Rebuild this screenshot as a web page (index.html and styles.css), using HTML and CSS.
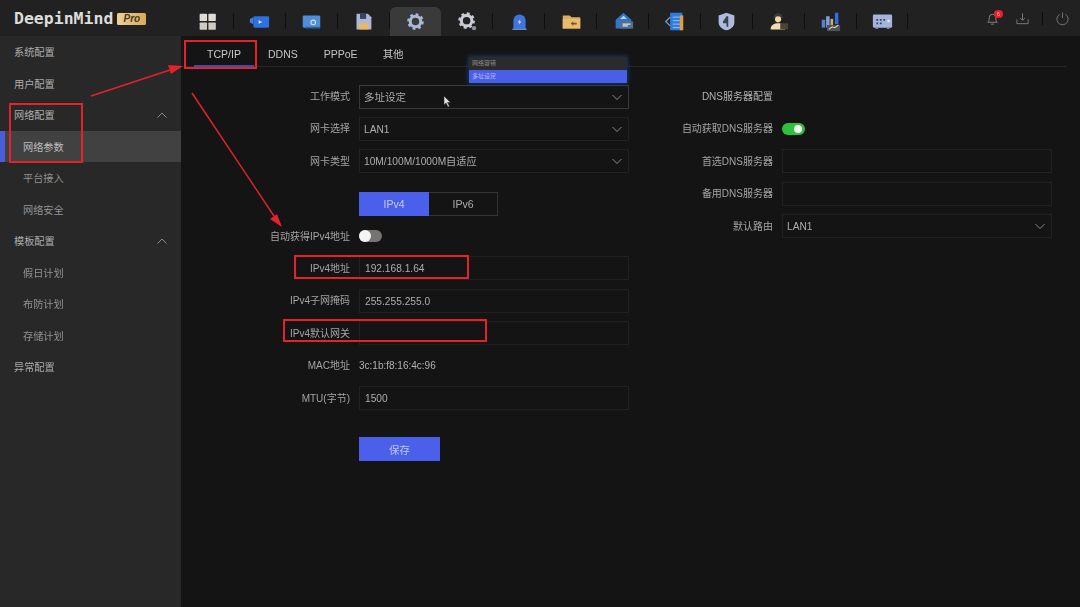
FILE: index.html
```html
<!DOCTYPE html>
<html lang="zh">
<head>
<meta charset="utf-8">
<title>DeepinMind Pro</title>
<link rel="stylesheet" href="styles.css">
</head>
<body>
<div class="page">
  <header class="topbar">
    <div class="brand"><span class="brand-name">DeepinMind</span><span class="brand-pro">Pro</span></div>
    <nav class="nav">
      <div class="nav-item"><svg class="ico" viewBox="0 0 24 24"><rect x="3" y="3" width="8.500" height="8.500" rx="1" fill="#e0dcd4"/><rect x="13" y="3" width="8.500" height="8.500" rx="1" fill="#e0dcd4"/><rect x="3" y="13" width="8.500" height="8.500" rx="1" fill="#cfcbc3"/><rect x="13" y="13" width="8.500" height="8.500" rx="1" fill="#cfcbc3"/></svg></div>
      <div class="nav-item"><svg class="ico" viewBox="0 0 24 24"><path d="M1 9l4-2v8l-4-2z" fill="#3f7fd8"/><rect x="5" y="6" width="18" height="13" rx="1.500" fill="#2f6fe0"/><path d="M11 10.500l4 2-4 2z" fill="#e8eefc"/></svg></div>
      <div class="nav-item"><svg class="ico" viewBox="0 0 24 24"><rect x="2" y="5" width="20" height="14" rx="1.500" fill="#4f8fd8"/><rect x="5" y="18" width="17" height="2" fill="#2c5f9f"/><circle cx="14" cy="13" r="2.600" fill="none" stroke="#cfe0f5" stroke-width="1.200"/></svg></div>
      <div class="nav-item"><svg class="ico" viewBox="0 0 24 24"><path d="M4 3h13l4 4v14H4z" fill="#aab8dc"/><rect x="8" y="3" width="7" height="6" fill="#39425c"/><rect x="7" y="14" width="11" height="7" fill="#eab95c"/></svg></div>
      <div class="nav-item is-active"><svg class="ico" viewBox="0 0 24 24"><circle cx="12" cy="12" r="6" fill="none" stroke="#a8bad8" stroke-width="3.500"/><circle cx="12" cy="12" r="8" fill="none" stroke="#a8bad8" stroke-width="3" stroke-dasharray="3.100 3.180"/></svg></div>
      <div class="nav-item"><svg class="ico" viewBox="0 0 24 24"><circle cx="11" cy="11" r="6" fill="none" stroke="#c9ccd4" stroke-width="3.500"/><circle cx="11" cy="11" r="8" fill="none" stroke="#c9ccd4" stroke-width="3" stroke-dasharray="3.100 3.180"/><circle cx="19.500" cy="19.500" r="2.500" fill="#8f929a"/></svg></div>
      <div class="nav-item"><svg class="ico" viewBox="0 0 24 24"><path d="M5 20v-9a7 7 0 0 1 14 0v9z" fill="#3f74dc"/><rect x="4" y="20" width="16" height="1.500" fill="#7fa3e6"/><path d="M13 9l-3 4h2l-1 3 3-4h-2z" fill="#dfe8fb"/></svg></div>
      <div class="nav-item"><svg class="ico" viewBox="0 0 24 24"><path d="M2 5h8l2 2h10v13H2z" fill="#dcae5e"/><rect x="2" y="9" width="20" height="11" fill="#e8bc6c"/><path d="M11 14l3-2v1.500h4v2h-4V17z" fill="#7a5a2c"/></svg></div>
      <div class="nav-item"><svg class="ico" viewBox="0 0 24 24"><path d="M12 2L3 10v10h18V10z" fill="#2f76c8"/><path d="M8 9l4-3.500L16 9z" fill="#bcd6f2"/><rect x="8" y="12" width="15" height="8" fill="#56708c"/><path d="M11 15h9M11 17h6" stroke="#cfe2f5" stroke-width="1.200"/></svg></div>
      <div class="nav-item"><svg class="ico" viewBox="0 0 24 24"><rect x="7" y="2" width="14" height="20" fill="#2f7be0"/><rect x="18" y="5" width="4" height="17" fill="#e0a040"/><path d="M10 7h8M10 11h8M10 15h8M10 19h8" stroke="#a9cdf5" stroke-width="1"/><path d="M7 7L2 12l5 5" fill="none" stroke="#7f9ccc" stroke-width="1.500"/></svg></div>
      <div class="nav-item"><svg class="ico" viewBox="0 0 24 24"><path d="M12 2l9 3v8c0 5-5 8-9 9-4-1-9-4-9-9V5z" fill="#aebbdc"/><path d="M14 6v12h-2v-4H8v-2l4-6z" fill="#3a4058"/></svg></div>
      <div class="nav-item"><svg class="ico" viewBox="0 0 24 24"><path d="M6 8a5.500 5.500 0 0 1 11 0z" fill="#3a3a3c"/><circle cx="11.500" cy="9.500" r="3.500" fill="#f0d6a8"/><path d="M3 21c0-5 4-7 8.500-7s8 2 8 7z" fill="#f0dcb0"/><rect x="14" y="14" width="9" height="7" fill="#4a4436"/></svg></div>
      <div class="nav-item"><svg class="ico" viewBox="0 0 24 24"><rect x="2" y="10" width="4" height="9" fill="#5a80d0"/><rect x="7" y="6" width="4" height="13" fill="#7f9fe0"/><rect x="12" y="9" width="3" height="8" fill="#e0a850"/><rect x="17" y="2" width="4" height="13" fill="#2f6fe0"/><rect x="8" y="16" width="15" height="7" fill="#4c4f5c"/><path d="M10 21l4-3 3 1 4-3" fill="none" stroke="#e8d8b0" stroke-width="1.200"/></svg></div>
      <div class="nav-item"><svg class="ico" viewBox="0 0 24 24"><rect x="1" y="4" width="22" height="15" rx="1.500" fill="#a4b4dc"/><rect x="4" y="19" width="3" height="1.500" fill="#8090b8"/><rect x="17" y="19" width="3" height="1.500" fill="#8090b8"/><path d="M5 9h2v2H5zM9 9h2v2H9zM13 9h2v2h-2zM5 13h2v2H5zM9 13h2v2H9z" fill="#39425c"/><circle cx="19" cy="11.500" r="1.500" fill="#e8eefc"/></svg></div>
    </nav>
    <div class="tools">
      <div class="tool tool-bell"><svg class="tool-ico" viewBox="0 0 16 16"><path d="M3 12c1-1 1.500-2 1.500-5a3.500 3.500 0 0 1 7 0c0 3 .5 4 1.500 5zM6.500 14h3" fill="none" stroke="#8a8a8a" stroke-width="1"/></svg><span class="badge">6</span></div>
      <div class="tool"><svg class="tool-ico" viewBox="0 0 16 16"><path d="M2 9v4.500h12V9M8 2.500v7M5.500 7.500L8 10l2.500-2.500" fill="none" stroke="#7c7c7c" stroke-width="1"/></svg></div>
      <div class="tool-divider"></div>
      <div class="tool"><svg class="tool-ico" viewBox="0 0 16 16"><path d="M5 3.500a6 6 0 1 0 6 0M8 1.500v6" fill="none" stroke="#777" stroke-width="1"/></svg></div>
    </div>
  </header>

  <div class="body">
    <aside class="sidebar">
      <div class="side-item">系统配置</div>
      <div class="side-item">用户配置</div>
      <div class="side-item">网络配置<svg class="side-chev" viewBox="0 0 12 8"><path d="M1.500 6.500L6 2l4.500 4.500" fill="none" stroke="#8a8a8a" stroke-width="1"/></svg></div>
      <div class="side-item side-sub is-current">网络参数</div>
      <div class="side-item side-sub">平台接入</div>
      <div class="side-item side-sub">网络安全</div>
      <div class="side-item">模板配置<svg class="side-chev" viewBox="0 0 12 8"><path d="M1.500 6.500L6 2l4.500 4.500" fill="none" stroke="#8a8a8a" stroke-width="1"/></svg></div>
      <div class="side-item side-sub">假日计划</div>
      <div class="side-item side-sub">布防计划</div>
      <div class="side-item side-sub">存储计划</div>
      <div class="side-item">异常配置</div>
    </aside>

    <main class="main">
      <div class="tabs">
        <div class="tab is-on">TCP/IP</div>
        <div class="tab tab-ddns">DDNS</div>
        <div class="tab tab-pppoe">PPPoE</div>
        <div class="tab tab-other">其他</div>
      </div>
      <div class="columns">
        <section class="form form-left">
          <label class="lbl">工作模式</label>
          <div class="field select strong">多址设定<svg class="chev" viewBox="0 0 12 8"><path d="M1.500 2L6 6.500 10.500 2" fill="none" stroke="#8a8a8a" stroke-width="1"/></svg></div>
          <label class="lbl">网卡选择</label>
          <div class="field select">LAN1<svg class="chev" viewBox="0 0 12 8"><path d="M1.500 2L6 6.500 10.500 2" fill="none" stroke="#8a8a8a" stroke-width="1"/></svg></div>
          <label class="lbl">网卡类型</label>
          <div class="field select">10M/100M/1000M自适应<svg class="chev" viewBox="0 0 12 8"><path d="M1.500 2L6 6.500 10.500 2" fill="none" stroke="#8a8a8a" stroke-width="1"/></svg></div>
          <span></span>
          <div class="seg"><div class="seg-btn is-on">IPv4</div><div class="seg-btn">IPv6</div></div>
          <label class="lbl">自动获得IPv4地址</label>
          <div class="toggle-cell"><span class="toggle"></span></div>
          <label class="lbl">IPv4地址</label>
          <div class="field">192.168.1.64</div>
          <label class="lbl">IPv4子网掩码</label>
          <div class="field">255.255.255.0</div>
          <label class="lbl">IPv4默认网关</label>
          <div class="field"></div>
          <label class="lbl">MAC地址</label>
          <div class="plain">3c:1b:f8:16:4c:96</div>
          <label class="lbl">MTU(字节)</label>
          <div class="field">1500</div>
          <span></span>
          <button class="save" type="button">保存</button>
        </section>
        <section class="form form-right">
          <div class="lbl strong-lbl">DNS服务器配置</div>
          <div></div>
          <label class="lbl">自动获取DNS服务器</label>
          <div class="toggle-cell"><span class="toggle is-on"></span></div>
          <label class="lbl">首选DNS服务器</label>
          <div class="field"></div>
          <label class="lbl">备用DNS服务器</label>
          <div class="field"></div>
          <label class="lbl">默认路由</label>
          <div class="field select">LAN1<svg class="chev" viewBox="0 0 12 8"><path d="M1.500 2L6 6.500 10.500 2" fill="none" stroke="#8a8a8a" stroke-width="1"/></svg></div>
        </section>
      </div>
    </main>
  </div>

  <div class="menu">
    <div class="menu-item">网络容错</div>
    <div class="menu-item is-on">多址设定</div>
  </div>

  <svg class="marks" viewBox="0 0 1080 607">
    <g fill="none" stroke="#e3222b" stroke-width="2">
      <rect x="185" y="41" width="71" height="27"/>
      <rect x="10" y="104" width="72" height="58"/>
      <rect x="295" y="256" width="173" height="22"/>
      <rect x="284" y="320" width="202" height="21"/>
    </g>
    <g fill="none" stroke="#e3222b" stroke-width="1.500">
      <path d="M91 96L170 70"/>
      <path d="M192 93L274 216"/>
    </g>
    <path d="M183 66l-15 -1 3 9z" fill="#e3222b"/>
    <path d="M282 227l-12 -8 7 -5z" fill="#e3222b"/>
    <path d="M444 96v9l2-2 2 4 1.500-.8-2-3.700h3z" fill="#ddd" stroke="#222" stroke-width=".5"/>
  </svg>
</div>
</body>
</html>
```
FILE: styles.css
```css
* { box-sizing: border-box; }
html, body { margin: 0; padding: 0; }
body {
  width: 1080px;
  height: 607px;
  overflow: hidden;
  background: #141414;
  font-family: "Liberation Sans", "Noto Sans CJK SC", sans-serif;
  font-size: 10px;
  color: #a6a6a6;
}
.page {
  position: relative;
  width: 1080px;
  height: 607px;
  display: flex;
  flex-direction: column;
  filter: blur(0.4px);
}

/* top bar */
.topbar {
  height: 36px;
  flex: none;
  display: flex;
  align-items: stretch;
  background: #212121;
}
.brand {
  width: 181px;
  flex: none;
  padding-left: 14px;
  display: flex;
  align-items: center;
  gap: 4px;
}
.brand-name {
  font-family: "DejaVu Sans Mono", monospace;
  font-weight: 700;
  font-size: 16.500px;
  color: #dcdcda;
}
.brand-pro {
  width: 29px;
  height: 12px;
  margin-top: 1px;
  border-radius: 1.500px;
  background: linear-gradient(90deg, #e8d19c, #d9a95a);
  color: #4a3a1c;
  font-size: 10px;
  line-height: 12px;
  font-weight: 700;
  font-style: italic;
  text-align: center;
}
.nav {
  display: flex;
  margin-left: 1px;
}
.nav-item {
  position: relative;
  width: 51.900px;
  display: flex;
  align-items: center;
  justify-content: center;
  padding-top: 7px;
}
.nav-item::after {
  content: "";
  position: absolute;
  right: 0;
  top: 13px;
  height: 16px;
  width: 1px;
  background: #0f0f0f;
}
.nav-item.is-active {
  margin-top: 7px;
  padding-top: 0;
  border-radius: 6px 6px 0 0;
  background: #3a3a3a;
}
.nav-item.is-active::after { display: none; }
.ico { width: 21px; height: 21px; }
.tools {
  margin-left: auto;
  display: flex;
  align-items: center;
  padding-right: 10px;
  padding-top: 1px;
}
.tool {
  position: relative;
  width: 15px;
  height: 16px;
  margin-left: 15px;
}
.tool-ico { display: block; width: 15px; height: 15px; }
.tool:last-child { margin-left: 12px; }
.tool-divider {
  width: 1px;
  height: 13px;
  margin-left: 12px;
  background: #0c0c0c;
}
.badge {
  position: absolute;
  right: -3px;
  top: -1px;
  width: 9px;
  height: 8px;
  border-radius: 4px;
  background: #e8202c;
  color: #f2c0c0;
  font-size: 5px;
  line-height: 8px;
  text-align: center;
}

/* body */
.body { flex: 1; display: flex; min-height: 0; }
.sidebar {
  width: 181px;
  flex: none;
  background: #282828;
}
.side-item {
  height: 31.500px;
  display: flex;
  align-items: center;
  justify-content: space-between;
  padding: 0 13px 0 14px;
  font-size: 10.200px;
  color: #adadad;
}
.side-sub { padding-left: 23px; color: #929292; }
.side-item.is-current {
  background: #414141;
  color: #bcbcbc;
  box-shadow: inset 5px 0 0 #4a5ed8;
}
.side-chev { width: 12px; height: 8px; }

.main { flex: 1; padding: 0 13px 0 1px; min-width: 0; }
.tabs {
  height: 31px;
  display: flex;
  align-items: center;
  border-bottom: 1px solid #262626;
  font-size: 10.500px;
  color: #c4c4c4;
}
.tab {
  height: 31px;
  line-height: 36px;
  text-align: center;
  flex: none;
}
.tab.is-on {
  width: 60px;
  margin-left: 12px;
  color: #cccccc;
  border-bottom: 2px solid #3c4ea8;
}
.tab-ddns { margin-left: 14px; }
.tab-pppoe { margin-left: 26px; }
.tab-other { margin-left: 25px; }

.columns {
  display: flex;
  padding-top: 17.500px;
}
.form {
  display: grid;
  grid-auto-rows: 24px;
  row-gap: 8.400px;
  column-gap: 9px;
  align-items: center;
}
.form-left {
  grid-template-columns: 168px 270px;
  grid-template-rows: 24px 24px 24px 34px 24px 24px 24px 24px 24px 24px 43px;
}
.form-right { grid-template-columns: 144px 270px; }
.lbl {
  padding-bottom: 2px;
  text-align: right;
  color: #a4a4a4;
  white-space: nowrap;
}
.strong-lbl { color: #b0b0b0; }
.field {
  position: relative;
  height: 24px;
  line-height: 24px;
  padding: 0 4px 0 5px;
  border: 1px solid #212121;
  color: #adadad;
  font-size: 10.200px;
}
.select { padding-left: 4px; }
.strong { border-color: #3a3a3a; font-size: 10.500px; line-height: 22px; }
.chev {
  position: absolute;
  right: 5px;
  top: 7px;
  width: 12px;
  height: 8px;
}
.plain { color: #b0b0b0; font-size: 10px; }
.seg {
  display: flex;
  align-self: end;
  width: 139px;
  height: 24px;
  border: 1px solid #333;
  font-size: 10.500px;
}
.seg-btn {
  flex: 1;
  line-height: 22px;
  text-align: center;
  color: #adadad;
}
.seg-btn.is-on {
  flex: none;
  width: 70px;
  margin: -1px 0 -1px -1px;
  line-height: 24px;
  background: #4a60ea;
  color: #c4cbf3;
}
.toggle-cell { display: flex; align-items: center; }
.toggle {
  position: relative;
  display: block;
  width: 23px;
  height: 12px;
  border-radius: 6px;
  background: #767472;
}
.toggle::after {
  content: "";
  position: absolute;
  left: 0;
  top: 0;
  width: 12px;
  height: 12px;
  border-radius: 50%;
  background: #f4f4f4;
}
.toggle.is-on { background: #2ec23c; }
.toggle.is-on::after { left: 12px; top: 2px; width: 8px; height: 8px; }
.save {
  align-self: end;
  width: 81px;
  height: 24px;
  padding: 0;
  border: 0;
  background: #4a60ea;
  color: #bfc8f5;
  font-family: inherit;
  font-size: 10.500px;
}

/* overlays */
.menu {
  position: absolute;
  left: 469px;
  top: 57px;
  width: 158px;
  box-shadow: 0 0 5px #17488f;
  font-size: 6px;
  line-height: 13px;
}
.menu-item { height: 13px; padding-left: 3px; background: #2b2b2b; color: #8a8a8a; }
.menu-item.is-on { background: #4a5ee8; color: #b5bef0; }
.marks {
  position: absolute;
  left: 0;
  top: 0;
  width: 1080px;
  height: 607px;
  pointer-events: none;
}
```
